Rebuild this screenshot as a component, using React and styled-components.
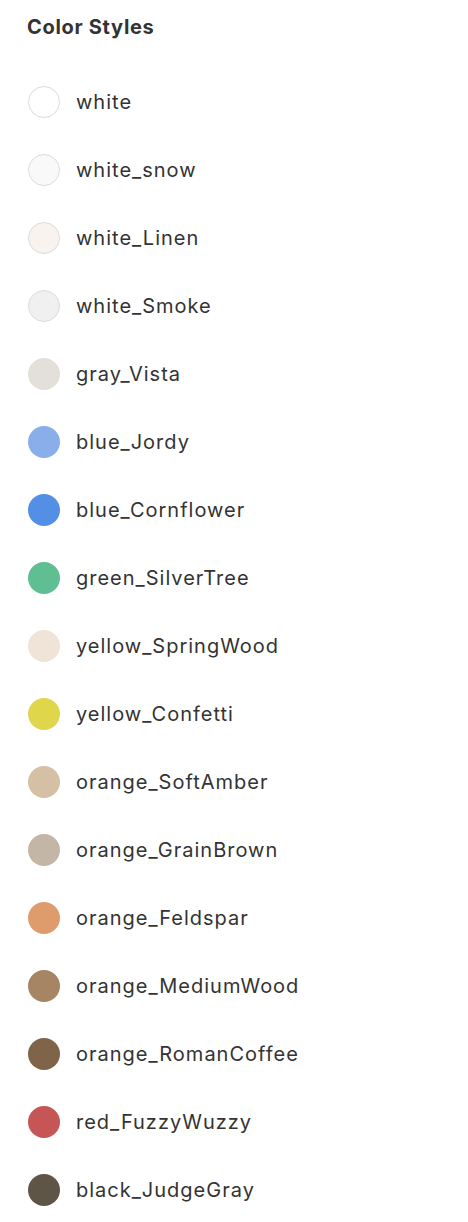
import React from "react";
import styled, { createGlobalStyle } from "styled-components";

const colors = [
    { name: "white", hex: "#ffffff", border: true },
    { name: "white_snow", hex: "#f9f9f9", border: true },
    { name: "white_Linen", hex: "#f8f3ee", border: true },
    { name: "white_Smoke", hex: "#f0f0f0", border: true },
    { name: "gray_Vista", hex: "#e3dfd9" },
    { name: "blue_Jordy", hex: "#89aeea" },
    { name: "blue_Cornflower", hex: "#548fe6" },
    { name: "green_SilverTree", hex: "#60bf92" },
    { name: "yellow_SpringWood", hex: "#f0e4d8" },
    { name: "yellow_Confetti", hex: "#dfd64b" },
    { name: "orange_SoftAmber", hex: "#d5c0a6" },
    { name: "orange_GrainBrown", hex: "#c4b6a6" },
    { name: "orange_Feldspar", hex: "#de9c6c" },
    { name: "orange_MediumWood", hex: "#a58564" },
    { name: "orange_RomanCoffee", hex: "#7f644a" },
    { name: "red_FuzzyWuzzy", hex: "#c65555" },
    { name: "black_JudgeGray", hex: "#5f5547" },
];

const App = () => {
    return (
        <>
            <GlobalStyle />
            <Panel>
                <Title>Color Styles</Title>
                <List>
                    {colors.map((c) => (
                        <Row key={c.name}>
                            <Swatch $color={c.hex} $border={c.border} />
                            <Label>{c.name}</Label>
                        </Row>
                    ))}
                </List>
            </Panel>
        </>
    );
};
export default App;

const GlobalStyle = createGlobalStyle`
    body {
        margin: 0;
        background: #ffffff;
        font-family: Inter, "Noto Sans", sans-serif;
    }
`
const Panel = styled.div`
    width: 468px;
    padding: 15px 28px 0 27px;
    box-sizing: border-box;
`
const Title = styled.h2`
    margin: 0;
    font-size: 20px;
    line-height: 24px;
    font-weight: 700;
    letter-spacing: 0.7px;
    color: #333333;
`
const List = styled.ul`
    list-style: none;
    margin: 29px 0 0;
    padding: 0;
`
const Row = styled.li`
    display: flex;
    align-items: center;
    gap: 16px;
    height: 68px;
`
const Swatch = styled.span`
    width: 32px;
    height: 32px;
    margin-left: 1px;
    border-radius: 50%;
    box-sizing: border-box;
    flex-shrink: 0;
    background: ${(p) => p.$color};
    border: ${(p) => (p.$border ? "1px solid #dcdcdc" : "none")};
`
const Label = styled.span`
    font-size: 20px;
    letter-spacing: 1px;
    color: #333333;
`
